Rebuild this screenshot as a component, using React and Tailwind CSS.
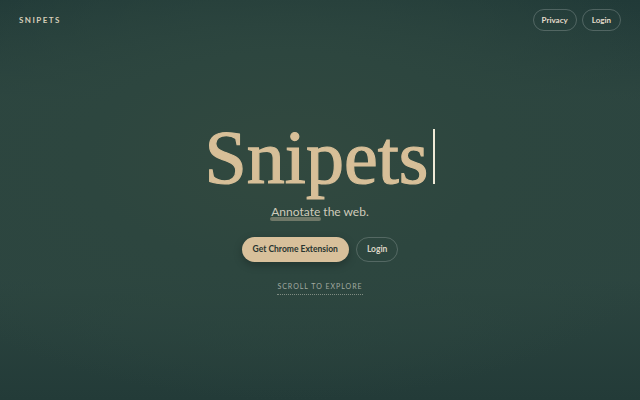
export default function App() {
  const sans = { fontFamily: 'Lato, "Noto Sans", sans-serif' };
  return (
    <div
      className="relative w-[640px] h-[400px] overflow-hidden flex flex-col bg-[#2b4440]"
      style={{
        ...sans,
        backgroundImage:
          "radial-gradient(ellipse 70% 60% at 45% 40%, #32493f 0%, #2d463f 45%, rgba(36,60,56,0) 100%), linear-gradient(180deg, #213a38 0%, #2c4540 25%, #2c4540 70%, #233b38 100%)",
      }}
    >
      <header className="flex items-center justify-between pl-[19px] pr-[19px] pt-[9px]">
        <div className="text-[8px] font-bold tracking-[0.18em] text-[#d6cdb9]">SNIPETS</div>
        <div className="flex gap-[5px]">
          <button className="h-[22px] px-[8px] rounded-full border border-[#ffffff33] text-[8px] font-bold text-[#e3dccb]">
            Privacy
          </button>
          <button className="h-[22px] px-[9px] rounded-full border border-[#ffffff33] text-[8px] font-bold text-[#e3dccb]">
            Login
          </button>
        </div>
      </header>

      <main className="flex flex-col items-center pt-[88px]">
        <div className="flex items-end h-[78px]">
          <h1
            className="text-[76px] leading-[80px] text-[#d7bf98] [-webkit-text-stroke:1.2px_#d7bf98]"
            style={{ fontFamily: '"Liberation Serif", "DejaVu Serif", serif' }}
          >
            Snipets
          </h1>
          <span className="ml-[5px] mb-[13px] w-[2px] h-[55px] bg-[#efe9d6]" />
        </div>
        <p className="mt-[6px] text-[12px] text-[#cfcbbb]">
          <span className="relative inline-block">
            <span className="absolute left-[-1px] right-[-1px] bottom-[0px] h-[4px] rounded-full bg-[#7f8473] opacity-80" />
            <span className="relative">Annotate</span>
          </span>{" "}
          the web.
        </p>
        <div className="mt-[16px] flex gap-[7px]">
          <button className="h-[25px] px-[11px] rounded-full bg-[#d8c09b] text-[8.5px] font-bold text-[#273430] shadow-[0_3px_8px_rgba(0,0,0,0.25)]">
            Get Chrome Extension
          </button>
          <button className="h-[25px] px-[10px] rounded-full border border-[#ffffff30] text-[8.5px] font-bold text-[#dcd6c6]">
            Login
          </button>
        </div>
        <div className="mt-[19px] text-[7px] tracking-[0.14em] text-[#a2aaa0] pb-[2px] border-b border-dotted border-[#7f8b82]">
          SCROLL TO EXPLORE
        </div>
      </main>
    </div>
  );
}
